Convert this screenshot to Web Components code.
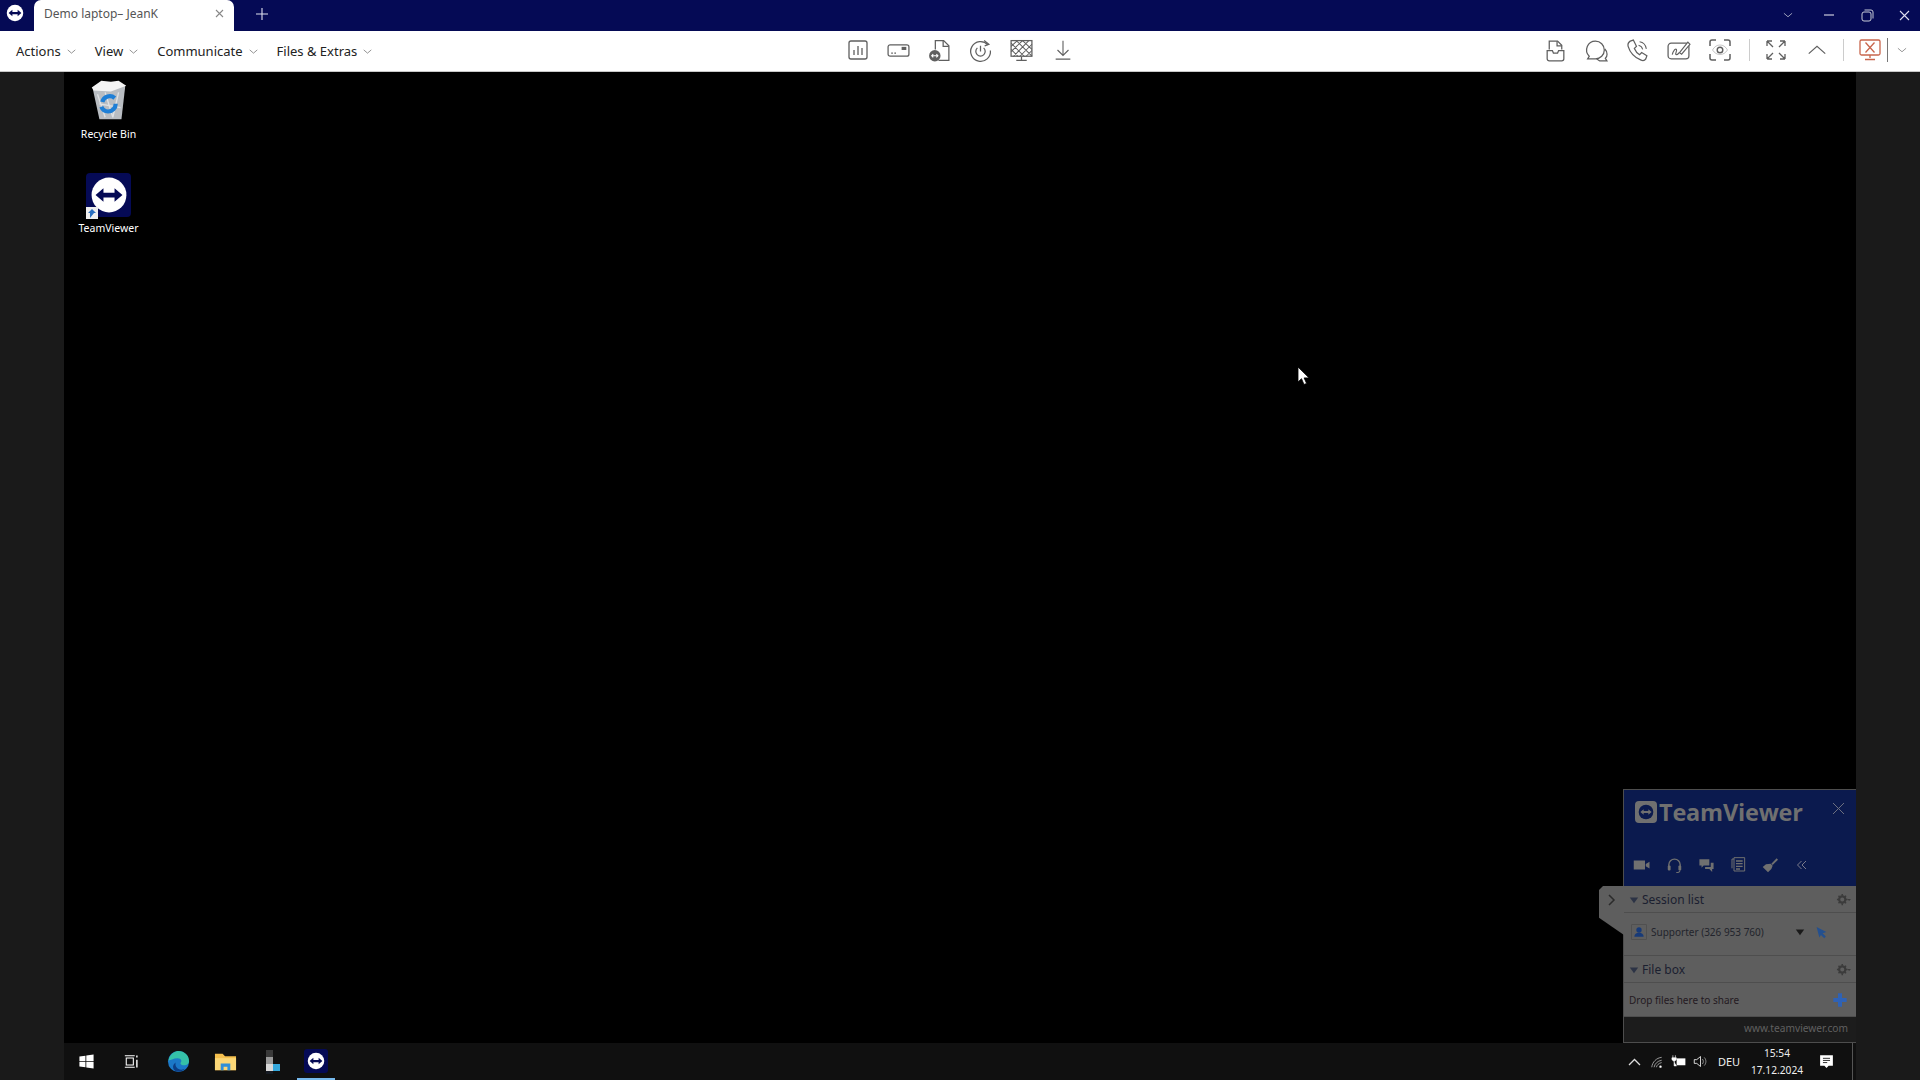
<!DOCTYPE html>
<html lang="en">
<head>
<meta charset="utf-8">
<title>Demo laptop - JeanK</title>
<style>
  html, body { margin: 0; height: 100%; background: #000; overflow: hidden; }
</style>
</head>
<body>
<tv-app>
  <tv-tabbar slot="tabs" title-text="Demo laptop– JeanK"></tv-tabbar>
  <tv-toolbar slot="toolbar"></tv-toolbar>
  <desktop-icon slot="icons" icon="bin" label="Recycle Bin"></desktop-icon>
  <desktop-icon slot="icons" icon="tv" label="TeamViewer"></desktop-icon>
  <tv-panel slot="overlay"></tv-panel>
  <win-taskbar slot="taskbar"></win-taskbar>
</tv-app>

<script>
// iconos dibujados a mano, todos en un viewBox de 24x24
const ICONS = {
  chev: '<path d="M5 9l7 6 7-6" fill="none" stroke="currentColor" stroke-width="1.3"/>',
  dashboard: '<rect x="3" y="3" width="18" height="18" rx="2" fill="none" stroke="currentColor" stroke-width="1.300"/><path d="M8 17v-5M12 17V8M16 17v-7" stroke="currentColor" stroke-width="1.300"/>',
  card: '<rect x="2" y="6.500" width="20" height="11" rx="2" fill="none" stroke="currentColor" stroke-width="1.200"/><path d="M5 14.500h1.600M8 14.500h1.600" stroke="currentColor" stroke-width="1.400"/><rect x="15" y="8.500" width="4.500" height="3" fill="currentColor"/>',
  filetv: '<path d="M8 11V2.500h8l5 5V21.500H11" fill="none" stroke="currentColor" stroke-width="1.200"/><path d="M15.500 2.500v5.500H21" fill="none" stroke="currentColor" stroke-width="1.200"/><circle cx="7.500" cy="17" r="5.500" fill="currentColor"/><path d="M4.500 17h6M6 15.400L4.500 17 6 18.600M9 15.400l1.500 1.600L9 18.600" fill="none" stroke="#fff" stroke-width="1"/>',
  power: '<path d="M19 6.500A9.500 9.500 0 1 0 21.500 12" fill="none" stroke="currentColor" stroke-width="1.200"/><path d="M15.500 2.500L20 6l-4 1.500" fill="none" stroke="currentColor" stroke-width="1.200"/><path d="M9 9.500a4.500 4.500 0 1 0 6 0M12 7.500V13" fill="none" stroke="currentColor" stroke-width="1.200"/>',
  nodisplay: '<rect x="2" y="2.500" width="20" height="15" fill="none" stroke="currentColor" stroke-width="1.200"/><path d="M2 8l6-5.500M2 13L13 2.500M4 18L19 2.500M10 18L22 6M16 18l6-6M7 2.500L22 17.500M2 5l13 13M2 11l7 7M13 2.500L22 11" stroke="currentColor" stroke-width="1"/><path d="M12 18v3M7 21.500h10" stroke="currentColor" stroke-width="1.200"/>',
  download: '<path d="M12 2v16M6 12l6 6 6-6M4 22h16" fill="none" stroke="currentColor" stroke-width="1.200"/>',
  inbox: '<path d="M6 11V3h8l4 4v4" fill="none" stroke="currentColor" stroke-width="1.200"/><path d="M13.500 3v4.500H18" fill="none" stroke="currentColor" stroke-width="1.200"/><path d="M4 12h5l1 2.500h4l1-2.500h5v8a2 2 0 0 1-2 2H6a2 2 0 0 1-2-2z" fill="none" stroke="currentColor" stroke-width="1.200"/>',
  chat: '<path d="M11 3a8.500 8.500 0 0 1 0 17H3.500l1.500-2.500A8.500 8.500 0 0 1 11 3z" fill="none" stroke="currentColor" stroke-width="1.200"/><path d="M20 10.500c3 3 2.500 7.500.5 9l1.500 2.500h-7l-3-2" fill="none" stroke="currentColor" stroke-width="1.200"/>',
  call: '<path d="M5 3l3-1 3 6-2 2c1 2.500 2.500 4.500 5 6l2-2 5 3-1 3c-1 1.500-3 2-5 1C9 18.500 4.500 13 3 8c-.5-2 .5-4 2-5z" fill="none" stroke="currentColor" stroke-width="1.200"/><path d="M13 7c2 .5 3.500 2 4 4M14 3.500c3.500 .5 6 3.500 6.500 7" fill="none" stroke="currentColor" stroke-width="1"/>',
  board: '<rect x="2" y="5" width="20" height="15" rx="3" fill="none" stroke="currentColor" stroke-width="1.200"/><path d="M6 16c1-4 3-6 4-5s-2 5 0 5 2-2 3-2" fill="none" stroke="currentColor" stroke-width="1.100"/><path d="M13 14l8-10 2 2-8 9.500z" fill="#fff" stroke="currentColor" stroke-width="1.100"/>',
  camera: '<path d="M2 8V4a2 2 0 0 1 2-2h4M16 2h4a2 2 0 0 1 2 2v4M22 16v4a2 2 0 0 1-2 2h-4M8 22H4a2 2 0 0 1-2-2v-4" fill="none" stroke="currentColor" stroke-width="1.500"/><path d="M4.500 12c2-3.500 4.500-5 7.500-5s5.500 1.500 7.500 5c-2 3-4.500 4.500-7.500 4.500S6.500 15 4.500 12z" fill="none" stroke="currentColor" stroke-width=".6" opacity=".6"/><circle cx="12" cy="12" r="2.800" fill="none" stroke="currentColor" stroke-width="1.400"/>',
  fullscreen: '<path d="M3 3l6 6M3 3v5M3 3h5M21 3l-6 6M21 3v5M21 3h-5M3 21l6-6M3 21v-5M3 21h5M21 21l-6-6M21 21v-5M21 21h-5" fill="none" stroke="currentColor" stroke-width="1.300"/>',
  up: '<path d="M3 16l9-8 9 8" fill="none" stroke="currentColor" stroke-width="1.300"/>',
  endsession: '<rect x="2" y="2" width="20" height="15" rx="1.500" fill="none" stroke="currentColor" stroke-width="1.300"/><path d="M7.500 4.500l9 10M16.500 4.500l-9 10M12 17v3M7 21.500h10" fill="none" stroke="currentColor" stroke-width="1.300"/>',
  logo: '<circle cx="12" cy="12" r="11" fill="#fff"/><path d="M3.500 12l5-4.200v2.700h7V7.800l5 4.200-5 4.200v-2.700h-7v2.700z" fill="#050a55"/>',
  win: '<path d="M2 5l8.500-1.200v7.700H2zM11.700 3.600L22 2v9.500H11.700zM2 12.700h8.500v7.500L2 19zM11.700 12.700H22V22l-10.300-1.500z" fill="#fff"/>',
  taskview: '<path d="M6 7h10v10H6zM4 4h14M4 20h14" fill="none" stroke="#fff" stroke-width="1.500"/><path d="M21 3.500v3M21 9.500v11" stroke="#fff" stroke-width="2"/>',
  edge: '<circle cx="12" cy="12" r="11" fill="#1b78c8"/><path d="M1.500 11C3 3.500 9 1 12 1c6 0 11 4.500 11 10.500 0 3-2.500 4.500-5 4.500s-4-1-4-2.500c2-2 1-5-3-5s-8 2.500-10.500 2.500z" fill="#35c1a8"/><path d="M9 13c-1 4 2 7.500 6 7.500 1.500 0 3-.5 4-1.500-2 2.500-5 4-8 3.500C6 22 4.500 16 9 13z" fill="#0c3e86"/>',
  folder: '<path d="M1 4h8l2.500 2.500H23V21H1z" fill="#f5c04e"/><path d="M1 8.500h22V21H1z" fill="#fbd777"/><path d="M7 14h10v7h-3v-3.500h-4V21H7z" fill="#2f8fd8"/>',
  appblock: '<rect x="5" y="0" width="7" height="7" fill="#3a3a3a"/><rect x="5" y="7" width="7" height="7" fill="#9a9a9a"/><rect x="5" y="14" width="7" height="7" fill="#d8d8d8"/><rect x="12" y="14" width="7" height="7" fill="#35a8dc"/><rect x="5" y="21" width="7" height="3" fill="#161b24"/>',
  wifi: '<path d="M3 21C4 12 11 5 20 4M7 21c1-6 6-11 13-12M11 21c.5-3.500 4-7 9-8" fill="none" stroke="#aaa" stroke-width="1.500"/><circle cx="18" cy="20" r="2" fill="#fff"/>',
  battery: '<rect x="9" y="7" width="14" height="11" fill="#fff"/><path d="M3 2v4M7 2v4M1.500 6h7v3l-3.500 3-3.500-3zM5 12v7h4" fill="#fff" stroke="#fff" stroke-width="1"/>',
  volume: '<path d="M2 9h4l6-5v16l-6-5H2z" fill="none" stroke="#fff" stroke-width="1.300"/><path d="M15 8c2 2 2 6 0 8M18 5.500c3.500 3.500 3.500 9.500 0 13" fill="none" stroke="#aaa" stroke-width="1.300"/>',
  action: '<path d="M3 3h18v15h-6l-3 3-3-3H3z" fill="#fff"/><path d="M7 7.500h10M7 10.500h10M7 13.500h6" stroke="#111" stroke-width="1.200"/>',
  cam: '<path d="M1 6h15v12H1zM17 10.500l5-3v9l-5-3z" fill="currentColor"/>',
  headset: '<path d="M4 14v-3a8 8 0 0 1 16 0v3" fill="none" stroke="currentColor" stroke-width="2"/><rect x="2.500" y="12" width="4" height="7" rx="1.500" fill="currentColor"/><rect x="17.500" y="12" width="4" height="7" rx="1.500" fill="currentColor"/><path d="M19.500 19c0 2-2 3-5 3" fill="none" stroke="currentColor" stroke-width="1.500"/>',
  bubbles: '<path d="M2 3h14v9H8l-3 3v-3H2z" fill="currentColor"/><path d="M18 8h4v9h-2v4l-4-4h-6v-3h8z" fill="currentColor"/>',
  notes: '<path d="M3 3v14M3 3h3" fill="none" stroke="currentColor" stroke-width="1.500"/><path d="M6 1h16v20H6z" fill="none" stroke="currentColor" stroke-width="1.500"/><path d="M9 6h10M9 10h10M9 14h10M9 18h6" stroke="currentColor" stroke-width="2"/>',
  brush: '<path d="M22 2l-8 8 2 2 8-8z" fill="currentColor"/><path d="M13 10l3 3-2 5-5 5-8-8 5-4z" fill="currentColor"/>',
  dbl: '<path d="M11 4l-8 8 8 8M20 4l-8 8 8 8" fill="none" stroke="currentColor" stroke-width="2"/>',
  gear: '<circle cx="10" cy="12" r="5" fill="none" stroke="currentColor" stroke-width="3.500"/><path d="M10 3v3M10 18v3M1.500 12h3M15.500 12h3M4 6l2 2M14 16l2 2M4 18l2-2M14 8l2-2" stroke="currentColor" stroke-width="2.500"/><path d="M18 11h6l-3 3.500z" fill="currentColor"/>',
  tri: '<path d="M2 6h20L12 20z" fill="currentColor"/>',
  pointer: '<path d="M3 2l18 9-7 2.500 6 6-3 3-6-6L8 21z" fill="#24508f"/>',
  plus: '<path d="M9 2h6v7h7v6h-7v7H9v-7H2V9h7z" fill="#2f62b5"/>',
  person: '<rect x="1" y="1" width="22" height="22" fill="none" stroke="#4a4a4a"/><circle cx="12" cy="9" r="4" fill="#173a78"/><path d="M5 19c0-4 3-6 7-6s7 2 7 6z" fill="#173a78"/>',
  bin: '<path d="M3.500 6l17-1.500-2 17.500H7z" fill="#b9bdc2"/><path d="M3 5.500L8 2l5 .5 4-.5 4 2.500-8 3-9-.5z" fill="#f4f4f4"/><path d="M6 9l4 12M10 8l4 13M17 8l-3 13M7 14l11 2" stroke="#dfe2e5" stroke-width=".7"/><path d="M8.500 13a4 4 0 0 1 6.500-2M15.500 14a4 4 0 0 1-4 4 4 4 0 0 1-3.500-2.500" fill="none" stroke="#1f7fd6" stroke-width="2.200"/>'
};

function svg(name, size, color) {
  const c = color ? ` style="color:${color}"` : '';
  return `<svg width="${size}" height="${size}" viewBox="0 0 24 24" aria-hidden="true"${c}>${ICONS[name]}</svg>`;
}

class TvApp extends HTMLElement {
  constructor() {
    super();
    this.attachShadow({ mode: 'open' });
    this.shadowRoot.innerHTML = `
      <style>
        :host { display: flex; flex-direction: column; width: 1920px; height: 1080px; background: #000; font-family: "Noto Sans", "Open Sans", sans-serif; }
        .cuerpo { flex: 1; display: grid; grid-template-columns: 64px 1792px 64px; min-height: 0; }
        .borde { background: #1a1a1a; }
        .escritorio { position: relative; display: flex; flex-direction: column; background: #000; min-height: 0; }
        .iconos { flex: 1; display: flex; flex-direction: column; align-items: flex-start; padding: 2px 0 0 0; }
        .cursor { position: absolute; left: 1233px; top: 294px; }
      </style>
      <slot name="tabs"></slot>
      <slot name="toolbar"></slot>
      <div class="cuerpo">
        <div class="borde"></div>
        <div class="escritorio">
          <div class="iconos"><slot name="icons"></slot></div>
          <slot name="overlay"></slot>
          <div class="cursor">
            <svg width="14" height="22" viewBox="0 0 14 22"><path d="M1 1v15l3.500-3.300 2.500 5.800 2.600-1.100-2.500-5.500h5z" fill="#fff" stroke="#000" stroke-width=".8"/></svg>
          </div>
          <slot name="taskbar"></slot>
        </div>
        <div class="borde"></div>
      </div>
    `;
  }
}

class TvTabbar extends HTMLElement {
  constructor() {
    super();
    this.attachShadow({ mode: 'open' });
    this.shadowRoot.innerHTML = `
      <style>
        :host { display: flex; align-items: stretch; height: 31px; background: #050a55; color: #fff; }
        .logo { width: 34px; display: flex; align-items: center; justify-content: center; padding: 0 5px 5px 0; box-sizing: border-box; }
        .tab { width: 200px; box-sizing: border-box; background: #fff; border-radius: 7px 7px 0 0; display: flex; align-items: center; justify-content: space-between; padding: 0 9px 4px 10px; color: #555; font-size: 12px; }
        .tab span { white-space: nowrap; }
        .plus { width: 56px; display: flex; align-items: center; justify-content: center; padding-bottom: 3px; box-sizing: border-box; }
        .espacio { flex: 1; }
        .win { display: flex; align-items: center; color: #c8cbd8; padding-bottom: 1px; }
        .win div { display: flex; justify-content: center; }
        .w1 { width: 48px; } .w2 { width: 34px; } .w3 { width: 42px; } .w4 { width: 32px; }
      </style>
      <div class="logo">${svg('logo', 18)}</div>
      <div class="tab">
        <span>${this.getAttribute('title-text')}</span>
        <svg width="11" height="11" viewBox="0 0 11 11"><path d="M2 2l7 7M9 2l-7 7" stroke="#888" stroke-width="1.100"/></svg>
      </div>
      <div class="plus"><svg width="12" height="12" viewBox="0 0 12 12"><path d="M6 0v12M0 6h12" stroke="#dfe1ee" stroke-width="1.100"/></svg></div>
      <div class="espacio"></div>
      <div class="win">
        <div class="w1">${svg('chev', 14)}</div>
        <div class="w2"><svg width="10" height="10"><path d="M0 5h10" stroke="#ccd" stroke-width="1.200"/></svg></div>
        <div class="w3"><svg width="13" height="13" viewBox="0 0 13 13" fill="none" stroke="#c8cbd8" stroke-width="1"><rect x="1" y="3" width="9" height="9" rx="2"/><path d="M3.500 1H10a2 2 0 0 1 2 2v6.500"/></svg></div>
        <div class="w4"><svg width="11" height="11"><path d="M1 1l9 9M10 1l-9 9" stroke="#dde" stroke-width="1.100"/></svg></div>
      </div>
    `;
  }
}

class TvToolbar extends HTMLElement {
  constructor() {
    super();
    this.attachShadow({ mode: 'open' });
    const menus = ['Actions', 'View', 'Communicate', 'Files & Extras'];
    const btn = (n, s = 24, col) => `<div class="btn">${svg(n, s, col)}</div>`;
    this.shadowRoot.innerHTML = `
      <style>
        :host { display: grid; grid-template-columns: 1fr auto 1fr; align-items: center; height: 40px; background: #fff; border-bottom: 1px solid #c8c8c8; color: #5f5f5f; }
        .menus { display: flex; gap: 17px; padding-left: 16px; color: #222; font-size: 13px; }
        .menus div { display: flex; align-items: center; gap: 4px; white-space: nowrap; }
        .menus svg { color: #666; }
        .grupo { display: flex; align-items: center; padding-bottom: 2px; }
        .btn { width: 41px; display: flex; justify-content: center; align-items: center; }
        .der { justify-content: flex-end; padding-right: 4px; }
        .sep { width: 1px; height: 22px; background: #ccc; }
        .s1 { margin: 0 5px 0 9px; } .s2 { margin: 0 9px 0 6px; }
        .fin { width: 34px; }
        .linea { width: 1px; height: 24px; background: #777; }
        .mas { width: 28px; display: flex; justify-content: center; color: #777; }
      </style>
      <div class="menus">${menus.map(m => `<div>${m.replace('&', '&amp;')}${svg('chev', 13)}</div>`).join('')}</div>
      <div class="grupo">
        ${btn('dashboard', 24)}${btn('card', 25)}${btn('filetv', 25)}${btn('power', 25)}${btn('nodisplay', 25)}${btn('download', 22)}
      </div>
      <div class="grupo der">
        ${btn('inbox', 25)}${btn('chat', 25)}${btn('call', 25)}${btn('board', 25)}${btn('camera', 24)}
        <div class="sep s1"></div>
        ${btn('fullscreen', 24)}${btn('up', 22)}
        <div class="sep s2"></div>
        <div class="btn fin">${svg('endsession', 24, '#c8654c')}</div>
        <div class="linea"></div>
        <div class="mas">${svg('chev', 14)}</div>
      </div>
    `;
  }
}

class DesktopIcon extends HTMLElement {
  constructor() {
    super();
    this.attachShadow({ mode: 'open' });
    const esTv = this.getAttribute('icon') === 'tv';
    const imagen = esTv
      ? `<div class="tv">${svg('logo', 38)}<div class="atajo"><svg width="11" height="11" viewBox="0 0 11 11"><path d="M3 10V5h-2l4-4 4 4H7" fill="#2a6fc0"/></svg></div></div>`
      : svg('bin', 46);
    this.shadowRoot.innerHTML = `
      <style>
        :host { display: flex; flex-direction: column; align-items: center; width: 89px; height: 94px; color: #fff; font-size: 10.500px; text-shadow: 0 1px 1px #000; }
        .img { height: 49px; display: flex; align-items: flex-end; justify-content: center; }
        .tv { position: relative; width: 45px; height: 44px; background: #050a55; border-radius: 4px; display: flex; align-items: center; justify-content: center; }
        .atajo { position: absolute; left: 0; bottom: -2px; width: 12px; height: 12px; background: #eee; display: flex; align-items: center; justify-content: center; }
        span { margin-top: 4px; line-height: 14px; white-space: nowrap; }
      </style>
      <div class="img">${imagen}</div>
      <span>${this.getAttribute('label')}</span>
    `;
  }
}

class TvPanel extends HTMLElement {
  constructor() {
    super();
    this.attachShadow({ mode: 'open' });
    this.shadowRoot.innerHTML = `
      <style>
        :host { position: absolute; right: 0; bottom: 37px; width: 233px; height: 254px; box-sizing: border-box; display: flex; flex-direction: column; background: #5e5e5e; border: 1px solid #4d4d4d; border-right: 0; color: #1a1e2c; font-family: "Noto Sans", sans-serif; }
        .cabecera { height: 96px; background: #0b1a4e; color: #707070; position: relative; box-sizing: border-box; padding: 9px 0 0 11px; }
        .marca { display: flex; align-items: center; gap: 2px; font: 700 23.500px/26px "Open Sans", sans-serif; letter-spacing: -.2px; }
        .cuadro { width: 22px; height: 22px; background: #707070; border-radius: 4px; display: flex; align-items: center; justify-content: center; }
        .cerrar { position: absolute; right: 12px; top: 7px; }
        .acciones { display: flex; align-items: center; height: 18px; margin: 31px 0 0 -9px; }
        .acciones div { width: 32px; display: flex; justify-content: center; align-items: center; }
        .seccion { height: 25px; display: flex; align-items: center; padding: 1px 5px 0; box-sizing: content-box; border-bottom: 1px solid #4e4e4e; font-size: 12px; gap: 3px; color: #1b2030; }
        .seccion + .cont + .seccion { border-top: 1px solid #4e4e4e; }
        .seccion span { flex: 1; }
        .cont { display: flex; align-items: center; padding: 0 8px 0 5px; font-size: 10px; color: #22242c; }
        .sesion { height: 42px; padding-left: 7px; gap: 4px; padding-bottom: 4px; box-sizing: border-box; }
        .sesion span { flex: 1; white-space: nowrap; }
        .caja { height: 33px; justify-content: space-between; box-sizing: border-box; color: #241a22; }
        .pie { flex: 1; background: #1c1c1c; border-top: 1px solid #4e4e4e; color: #606060; font-size: 10.200px; display: flex; align-items: center; justify-content: flex-end; padding: 0 8px 3px 0; }
        .asa { position: absolute; left: -25px; top: 96px; width: 25px; height: 49px; background: #5e5e5e; clip-path: polygon(4px 0, 100% 0, 100% 100%, 0 65%, 0 4px); display: flex; align-items: flex-start; justify-content: center; padding-top: 8px; box-sizing: border-box; }
      </style>
      <div class="cabecera">
        <div class="marca"><div class="cuadro">${svg('logo', 16, '#707070').replaceAll('#fff', '#0b1a4e').replaceAll('#050a55', '#707070')}</div><span>TeamViewer</span></div>
        <div class="cerrar"><svg width="11" height="11"><path d="M0 0l11 11M11 0L0 11" stroke="#6d7080" stroke-width="1"/></svg></div>
        <div class="acciones">
          <div>${svg('cam', 18)}</div><div>${svg('headset', 17)}</div><div>${svg('bubbles', 17)}</div><div>${svg('notes', 16)}</div><div>${svg('brush', 16)}</div><div>${svg('dbl', 12, '#7a7a8a')}</div>
        </div>
      </div>
      <div class="seccion">${svg('tri', 10, '#2c3345')}<span>Session list</span>${svg('gear', 15, '#3b3b3b')}</div>
      <div class="cont sesion">${svg('person', 16)}<span>Supporter (326 953 760)</span>${svg('tri', 10, '#1a1a1a')}<span style="flex:0 0 2px"></span>${svg('pointer', 13)}<span style="flex:0 0 16px"></span></div>
      <div class="seccion">${svg('tri', 10, '#2c3345')}<span>File box</span>${svg('gear', 15, '#3b3b3b')}</div>
      <div class="cont caja"><span>Drop files here to share</span>${svg('plus', 16)}</div>
      <div class="pie">www.teamviewer.com</div>
      <div class="asa"><svg width="8" height="12" viewBox="0 0 8 12"><path d="M1 1l5 5-5 5" fill="none" stroke="#2b2b2b" stroke-width="1.500"/></svg></div>
    `;
  }
}

class WinTaskbar extends HTMLElement {
  constructor() {
    super();
    this.attachShadow({ mode: 'open' });
    const app = (n, s, w, pad = 0) => `<div class="app" style="width:${w}px;padding-left:${pad}px">${svg(n, s)}</div>`;
    this.shadowRoot.innerHTML = `
      <style>
        :host { display: flex; align-items: center; justify-content: space-between; height: 37px; background: #101010; color: #fff; font-size: 11px; }
        .apps, .tray { display: flex; align-items: center; height: 100%; }
        .app { height: 100%; display: flex; align-items: center; justify-content: center; box-sizing: border-box; }
        .activo { border-bottom: 2px solid #76b9ed; }
        .tvmini { width: 24px; height: 24px; background: #050a55; border-radius: 3px; display: flex; align-items: center; justify-content: center; }
        .tray-i { width: 21.500px; display: flex; justify-content: center; }
        .idioma { width: 36px; text-align: center; color: #eee; }
        .reloj { width: 60px; text-align: center; line-height: 17px; font-size: 10.200px; color: #eee; }
        .notif { width: 45px; box-sizing: border-box; padding-right: 7px; display: flex; justify-content: center; }
        .ver { width: 4px; height: 100%; border-left: 1px solid #555; box-sizing: border-box; }
      </style>
      <div class="apps">
        ${app('win', 17, 45)}${app('taskview', 17, 43)}${app('edge', 23, 53)}${app('folder', 23, 40)}${app('appblock', 24, 52, 4)}
        <div class="app activo" style="width:38px"><div class="tvmini">${svg('logo', 18)}</div></div>
      </div>
      <div class="tray">
        <div class="tray-i" style="width:24px"><svg width="13" height="8"><path d="M1 7l5.500-5.500L12 7" fill="none" stroke="#ddd" stroke-width="1.300"/></svg></div>
        <div class="tray-i">${svg('wifi', 14)}</div>
        <div class="tray-i">${svg('battery', 15)}</div>
        <div class="tray-i">${svg('volume', 15)}</div>
        <div class="idioma">DEU</div>
        <div class="reloj">15:54<br>17.12.2024</div>
        <div class="notif">${svg('action', 17)}</div>
        <div class="ver"></div>
      </div>
    `;
  }
}

customElements.define('tv-app', TvApp);
customElements.define('tv-tabbar', TvTabbar);
customElements.define('tv-toolbar', TvToolbar);
customElements.define('desktop-icon', DesktopIcon);
customElements.define('tv-panel', TvPanel);
customElements.define('win-taskbar', WinTaskbar);
</script>
</body>
</html>
